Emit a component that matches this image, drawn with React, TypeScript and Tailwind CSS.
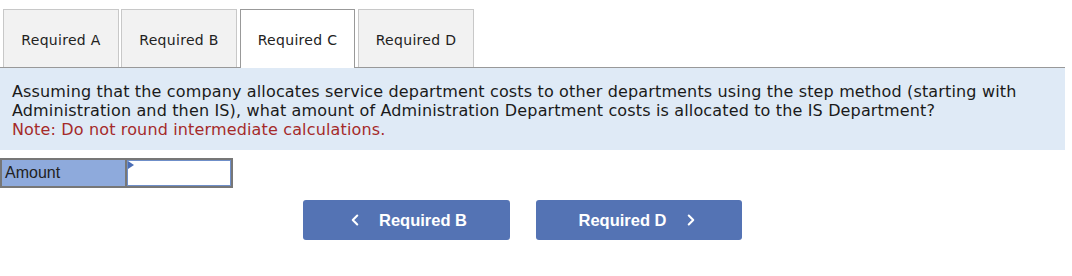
import { ChevronLeft, ChevronRight } from "lucide-react";

const tabs = [
  { label: "Required A", cls: "ml-0 w-[116px]" },
  { label: "Required B", cls: "ml-[2px] w-[116px]" },
  { label: "Required C", cls: "ml-[3px] w-[115px]" },
  { label: "Required D", cls: "ml-[3px] w-[116px]" },
];

export default function App() {
  const active = 2;

  return (
    <div className="w-[1072px] h-[276px] bg-white font-['DejaVu_Sans',Verdana,sans-serif] text-[#1a1a1a]">
      <div className="pt-[9px] pl-[3px] flex items-end relative z-10">
        {tabs.map((t, i) => (
          <div
            key={t.label}
            className={
              t.cls +
              (i === active
                ? " h-[59px] -mb-px bg-white border border-b-0 border-[#999]"
                : " h-[58px] bg-[#f2f2f2] border border-b-0 border-[#c8c8c8]") +
              " flex items-center justify-center pt-[3px] text-[14px] tracking-[0.3px] text-[#222]"
            }
          >
            <span className={i === active ? "-mt-px" : ""}>{t.label}</span>
          </div>
        ))}
      </div>
      <div className="w-[1065px] bg-[#dfeaf6] border-t border-[#999] px-[12px] pt-[14px] pb-[11px] text-[16px] tracking-[0.15px] leading-[19px]">
        <p>
          Assuming that the company allocates service department costs to other departments using the step method (starting with
          Administration and then IS), what amount of Administration Department costs is allocated to the IS Department?
        </p>
        <p className="text-[#a52a2a]">Note: Do not round intermediate calculations.</p>
      </div>
      <div className="mt-[8px] flex w-[233px] h-[30px] border-2 border-[#777]">
        <div className="w-[125px] bg-[#8eaadc] border-r-2 border-[#777] font-['Liberation_Sans',Arial,sans-serif] text-[16px] text-[#222] pl-[3px] leading-[25px]">
          Amount
        </div>
        <div className="relative flex-1 bg-white border border-[#6f8fc9]">
          <span className="absolute left-0 top-0 w-0 h-0 border-t-[4px] border-b-[4px] border-l-[6px] border-t-transparent border-b-transparent border-l-[#4a6db5]" />
        </div>
      </div>
      <div className="mt-[12px] flex gap-[26px] pl-[303px] font-['Liberation_Sans',Arial,sans-serif]">
        <button className="w-[207px] h-[40px] rounded-[3px] bg-[#5473b4] text-white font-bold text-[16.5px] flex items-center justify-center">
          <ChevronLeft size={18} strokeWidth={2.75} className="mr-[15px]" />
          Required B
        </button>
        <button className="w-[206px] h-[40px] rounded-[3px] bg-[#5473b4] text-white font-bold text-[16.5px] flex items-center justify-center">
          Required D
          <ChevronRight size={18} strokeWidth={2.75} className="ml-[15px]" />
        </button>
      </div>
    </div>
  );
}
